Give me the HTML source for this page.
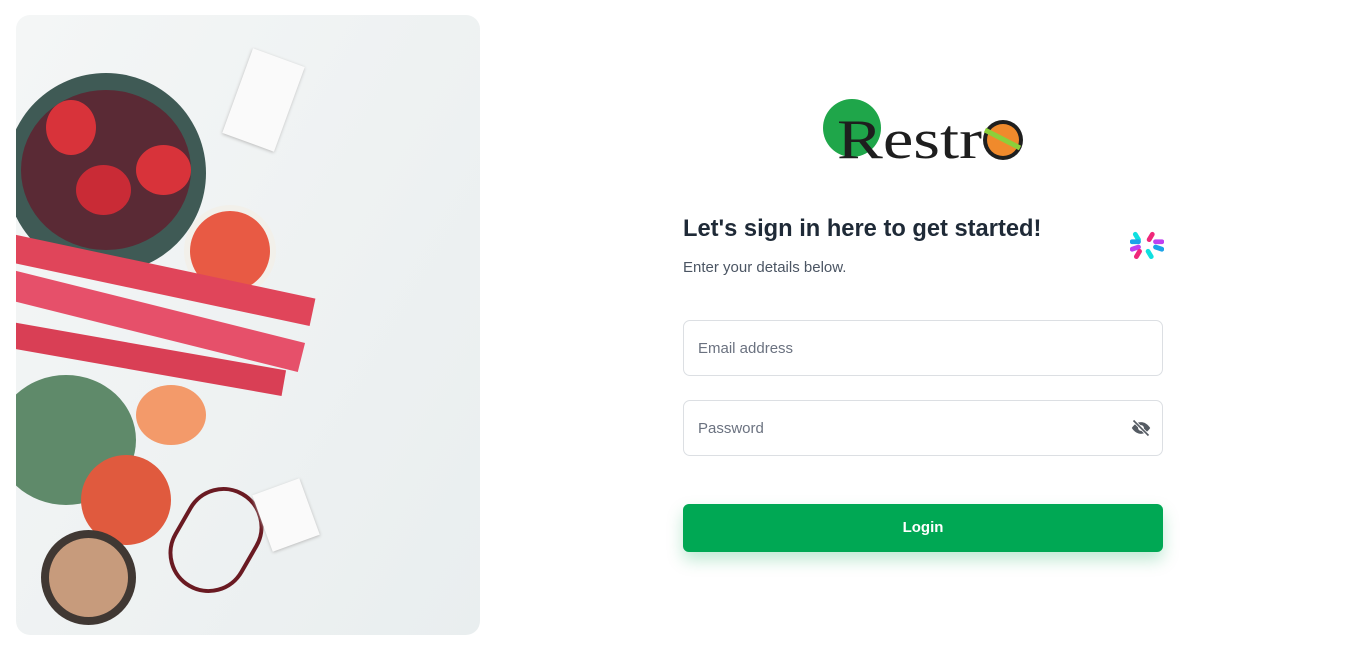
<!DOCTYPE html>
<html><head><meta charset="utf-8"><style>
*{margin:0;padding:0;box-sizing:border-box}
body{width:1366px;height:651px;background:#fff;font-family:"Liberation Sans",sans-serif;position:relative;overflow:hidden}
.img{position:absolute;left:16px;top:15px;width:464px;height:620px;border-radius:14px;background:linear-gradient(120deg,#f4f6f6,#e9eeef);overflow:hidden}
.s{position:absolute;border-radius:50%}
h1{position:absolute;left:683px;top:216px;font-size:23.7px;font-weight:bold;color:#1f2a37}
.sub{position:absolute;left:683px;top:259px;font-size:15px;color:#4b5563}
.inp{position:absolute;left:683px;width:480px;height:56px;border:1px solid #dcdfe3;border-radius:7px;font-size:15px;color:#6b7280;padding:19px 14px}
.btn{position:absolute;left:683px;top:504px;width:480px;height:48px;background:#00a854;border-radius:6px;color:#fff;font-weight:bold;font-size:15px;text-align:center;line-height:48px;box-shadow:0 8px 16px rgba(0,168,84,.25)}
</style></head><body>
<div class="img">
 <div class="s" style="left:-10px;top:58px;width:200px;height:200px;background:#3f5a55"></div>
 <div class="s" style="left:5px;top:75px;width:170px;height:160px;background:#5a2a35"></div>
 <div class="s" style="left:30px;top:85px;width:50px;height:55px;background:#d8333a"></div>
 <div class="s" style="left:120px;top:130px;width:55px;height:50px;background:#d8333a"></div>
 <div class="s" style="left:60px;top:150px;width:55px;height:50px;background:#c92b36"></div>
 <div class="s" style="left:168px;top:190px;width:92px;height:92px;background:#f2f0ea"></div>
 <div class="s" style="left:174px;top:196px;width:80px;height:80px;background:#e85a44"></div>
 <div style="position:absolute;left:-20px;top:250px;width:320px;height:28px;background:#e0455a;transform:rotate(12deg)"></div>
 <div style="position:absolute;left:-20px;top:290px;width:310px;height:30px;background:#e6506a;transform:rotate(14deg)"></div>
 <div style="position:absolute;left:-20px;top:330px;width:290px;height:26px;background:#d93f55;transform:rotate(10deg)"></div>
 <div class="s" style="left:-20px;top:360px;width:140px;height:130px;background:#5f8a6a"></div>
 <div class="s" style="left:120px;top:370px;width:70px;height:60px;background:#f39a6a"></div>
 <div class="s" style="left:65px;top:440px;width:90px;height:90px;background:#e05a3e"></div>
 <div class="s" style="left:25px;top:515px;width:95px;height:95px;background:#403833"></div>
 <div class="s" style="left:33px;top:523px;width:79px;height:79px;background:#c79b7c"></div>
 <div style="position:absolute;left:160px;top:470px;width:80px;height:110px;border:4px solid #6a1a22;border-radius:40px;transform:rotate(30deg)"></div>
 <div style="position:absolute;left:220px;top:40px;width:55px;height:90px;background:#fafafa;transform:rotate(20deg);box-shadow:0 1px 3px #bbb"></div>
 <div style="position:absolute;left:245px;top:470px;width:50px;height:60px;background:#fafafa;transform:rotate(-20deg);box-shadow:0 1px 3px #bbb"></div>
</div>
<svg style="position:absolute;left:815px;top:92px" width="215" height="75">
 <circle cx="37" cy="36" r="29" fill="#1fa64a"/>
 <circle cx="188" cy="48" r="20" fill="#1f1f1f"/>
 <circle cx="188" cy="48" r="16" fill="#f08a2c"/>
 <path d="M170 38 L205 56" stroke="#8ccf3a" stroke-width="5"/>
 <text x="22" y="66" font-family="Liberation Serif,serif" font-size="56" fill="#1e1e1e" textLength="145" lengthAdjust="spacingAndGlyphs">Restr</text>
</svg>
<svg style="position:absolute;left:1130px;top:231px" width="34" height="30" viewBox="0 0 32 28">
 <g stroke-width="4.5" stroke-linecap="round">
 <path d="M5 3l3 5" stroke="#10e0e0"/><path d="M21 3l-3 5" stroke="#f0287a"/>
 <path d="M2 10h6" stroke="#1ba3e8"/><path d="M24 10h6" stroke="#c040f0"/>
 <path d="M2 17l6-2" stroke="#c040f0"/><path d="M24 15l6 2" stroke="#1ba3e8"/>
 <path d="M9 19l-3 5" stroke="#f0287a"/><path d="M17 19l3 5" stroke="#10e0e0"/>
 </g></svg>
<h1>Let's sign in here to get started!</h1>
<div class="sub">Enter your details below.</div>
<div class="inp" style="top:320px">Email address</div>
<div class="inp" style="top:400px">Password</div>
<svg style="position:absolute;left:1131px;top:418px" width="20" height="20" viewBox="0 0 24 24"><path d="M1 12s4-7 11-7 11 7 11 7-4 7-11 7S1 12 1 12z" fill="#555b63"/><circle cx="12" cy="12" r="3.5" fill="#fff"/><path d="M3 3l18 18" stroke="#fff" stroke-width="4"/><path d="M3 3l18 18" stroke="#555b63" stroke-width="2"/></svg>
<div class="btn">Login</div>
</body></html>
